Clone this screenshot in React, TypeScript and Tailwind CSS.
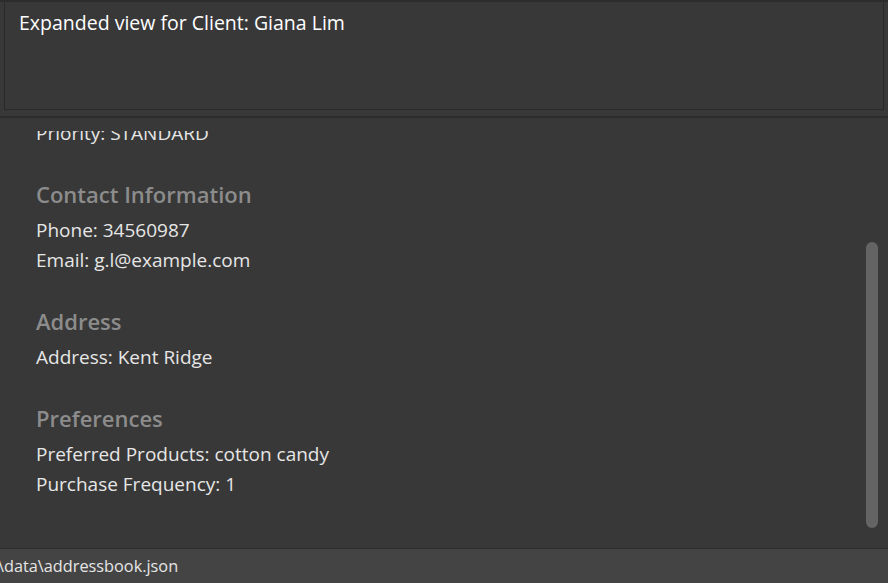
type Section = {
  title: string;
  lines: string[];
};

const SECTIONS: Section[] = [
  { title: 'Contact Information', lines: ['Phone: 34560987', 'Email: g.l@example.com'] },
  { title: 'Address', lines: ['Address: Kent Ridge'] },
  { title: 'Preferences', lines: ['Preferred Products: cotton candy', 'Purchase Frequency: 1'] },
];

const FONT = "font-['Open_Sans','Noto_Sans',sans-serif]";

export default function App() {
  return (
    <div className={`w-[888px] h-[583px] flex flex-col bg-[#383838] overflow-hidden ${FONT}`}>
      {/* result display */}
      <div className="h-[118px] shrink-0 border-t-2 border-b-2 border-[#2c2c2c] px-[4px] pb-[6px] flex">
        <div className="flex-1 border border-[#2a2a2a] border-t-0 bg-[#383838] px-[14px] pt-[8px]">
          <p className="text-[19.5px] leading-[26px] text-white">Expanded view for Client: Giana Lim</p>
        </div>
      </div>

      {/* client details, scrolled a little */}
      <div className="relative flex-1 flex flex-col pt-[13px] overflow-hidden">
        <div className="flex-1 overflow-hidden">
          <div className="-mt-[13px] pl-[36px] pr-[40px] pb-[30px]">
            <p className="text-[19px] leading-[30px] text-[#e6e6e6]">Priority: STANDARD</p>
            {SECTIONS.map((s) => (
              <div key={s.title} className="mt-[31px]">
                <h2 className="text-[22px] leading-[30px] font-semibold text-[#8c8c8c] mb-[6px]">{s.title}</h2>
                {s.lines.map((l) => (
                  <p key={l} className="text-[19px] leading-[30px] text-[#e6e6e6]">{l}</p>
                ))}
              </div>
            ))}
          </div>
        </div>
        <div className="absolute right-[10px] top-[124px] w-[12px] h-[286px] rounded-full bg-[#646464]" />
      </div>

      {/* status bar */}
      <div className="h-[35px] shrink-0 border-t border-[#2e2e2e] bg-[#444444] flex items-center">
        <span className="text-[16.3px] text-[#e6e6e6] -ml-[2px]">\data\addressbook.json</span>
      </div>
    </div>
  );
}
